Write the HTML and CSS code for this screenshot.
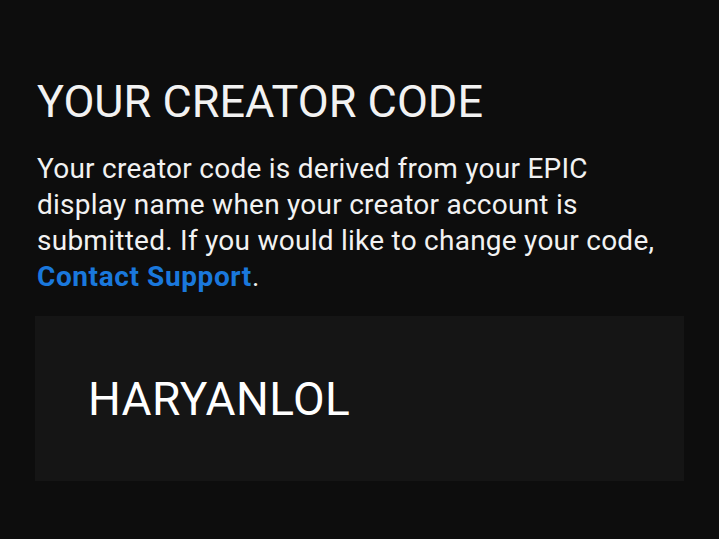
FILE: index.html
```html
<!DOCTYPE html>
<html lang="en">
  <head>
    <meta charset="utf-8" />
    <title>Creator Code</title>
    <link rel="stylesheet" href="styles.css">
  </head>
  <body>
    <section class="creator-code">
      <h1 class="creator-code__title">YOUR CREATOR CODE</h1>
      <p class="creator-code__text">
        Your creator code is derived from your EPIC display name when your
        creator account is submitted. If you would like to change your code,
        <a class="creator-code__link" href="#">Contact Support</a>.
      </p>
      <div class="creator-code__box">
        <span class="creator-code__value">HARYANLOL</span>
      </div>
    </section>
  </body>
</html>
```

FILE: styles.css
```css
html,
body {
  margin: 0;
  background-color: #0d0d0d;
}
.creator-code {
  padding: 76px 35px 0 37px;
  font-family: Roboto, "Liberation Sans", sans-serif;
  color: #f2f2f2;
}
.creator-code__title {
  margin: 0;
  font-size: 45px;
  font-weight: 400;
  line-height: 52px;
}
.creator-code__text {
  margin: 23px 0 0;
  max-width: 630px;
  font-size: 28px;
  line-height: 36px;
  letter-spacing: 0.25px;
}
.creator-code__link {
  color: #1a78dc;
  font-weight: 700;
  letter-spacing: 0.6px;
  text-decoration: none;
}
.creator-code__box {
  display: flex;
  align-items: center;
  margin: 21px 0 0 -2px;
  width: 649px;
  height: 165px;
  padding-left: 53px;
  box-sizing: border-box;
  background-color: #151515;
}
.creator-code__value {
  font-size: 46px;
  line-height: 1;
  letter-spacing: 0.4px;
  color: #ffffff;
}
```
